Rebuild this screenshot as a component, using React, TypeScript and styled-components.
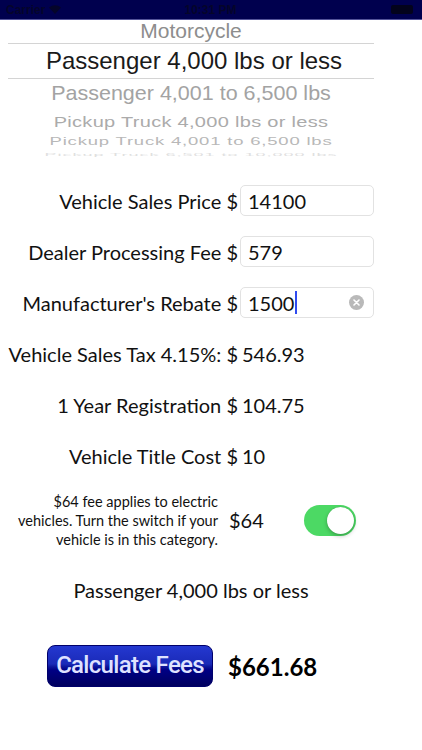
import React from "react";
import styled, { createGlobalStyle } from "styled-components";

const Global = createGlobalStyle`
  html, body { margin: 0; padding: 0; background: #fff; }
  body { font-family: "Lato", "Open Sans", sans-serif; color: #111; }
`;

const Page = styled.div`
  width: 422px;
  height: 750px;
  overflow: hidden;
  background: #fff;
`;

const StatusBar = styled.div`
  height: 20px;
  background: #00004e;
  border-bottom: 1px solid #54549a;
  box-sizing: border-box;
  display: grid;
  grid-template-columns: 1fr auto 1fr;
  align-items: center;
  padding: 0 7px 0 6px;
  font-family: "Liberation Sans", Arial, sans-serif;
  font-size: 12px;
  font-weight: 700;
  color: #05052a;
`;

const Carrier = styled.div`
  display: flex;
  align-items: center;
  gap: 4px;
`;

const Battery = styled.div`
  justify-self: end;
  width: 22px;
  height: 9px;
  background: #03031c;
  border-radius: 2px;
  margin-right: 2px;
`;

const Picker = styled.div`
  width: 366px;
  margin-left: 8px;
  height: 133px;
  display: flex;
  flex-direction: column;
  font-family: "Liberation Sans", Arial, sans-serif;
`;

const PickerItem = styled.div<{ $h: number; $size: number; $color: string; $sy: number; $ls?: number }>`
  height: ${(p) => p.$h}px;
  flex: none;
  display: flex;
  align-items: center;
  justify-content: center;
  font-size: ${(p) => p.$size}px;
  line-height: 1;
  color: ${(p) => p.$color};
  letter-spacing: ${(p) => p.$ls ?? 0}px;
  white-space: nowrap;
  transform: scaleY(${(p) => p.$sy});
`;

const SelectedItem = styled.div`
  height: 34px;
  flex: none;
  border-top: 1px solid #d4d4d4;
  border-bottom: 1px solid #d4d4d4;
  display: flex;
  align-items: center;
  justify-content: center;
  font-size: 24px;
  color: #1a1a1a;
  padding-left: 6px;
  white-space: nowrap;
`;

const Form = styled.div`
  margin-top: 22px;
  display: flex;
  flex-direction: column;
`;

const Row = styled.div`
  height: 51px;
  display: grid;
  grid-template-columns: 238px auto;
  align-items: center;
  font-size: 20px;
`;

const Label = styled.div`
  text-align: right;
  white-space: nowrap;
`;

const Value = styled.div`
  padding-left: 4px;
  white-space: nowrap;
`;

const Input = styled.div`
  margin-left: 2px;
  width: 134px;
  height: 31px;
  box-sizing: border-box;
  border: 1px solid #e2e2e2;
  border-radius: 5px;
  display: flex;
  align-items: center;
  padding-left: 7px;
  padding-right: 9px;
  font-size: 20px;
`;

const Caret = styled.span`
  display: inline-block;
  width: 2px;
  height: 23px;
  background: #2f4bf0;
  margin-left: 1px;
`;

const Clear = styled.span`
  margin-left: auto;
  width: 15px;
  height: 15px;
  border-radius: 50%;
  background: #b9b9b9;
  display: flex;
  align-items: center;
  justify-content: center;
`;

const ElectricRow = styled.div`
  margin-top: 10px;
  height: 58px;
  display: grid;
  grid-template-columns: 218px 86px 52px;
  align-items: center;
`;

const Note = styled.div`
  text-align: right;
  font-size: 14.5px;
  line-height: 19px;
  white-space: nowrap;
`;

const NotePrice = styled.div`
  padding-left: 11px;
  font-size: 20px;
`;

const Toggle = styled.div<{ $on: boolean }>`
  width: 52px;
  height: 31px;
  border-radius: 16px;
  background: ${(p) => (p.$on ? "#4cd964" : "#e5e5e5")};
  display: flex;
  align-items: center;
  justify-content: ${(p) => (p.$on ? "flex-end" : "flex-start")};
  padding: 0 2px;
  box-sizing: border-box;
`;

const Knob = styled.div`
  width: 27px;
  height: 27px;
  border-radius: 50%;
  background: #fff;
  box-shadow: 0 2px 4px rgba(0, 0, 0, 0.25), 0 0 1px rgba(0, 0, 0, 0.2);
`;

const Category = styled.div`
  margin-top: 29px;
  width: 382px;
  text-align: center;
  font-size: 20px;
`;

const TotalRow = styled.div`
  margin-top: 43px;
  display: flex;
  align-items: center;
  padding-left: 47px;
  gap: 15px;
`;

const CalcButton = styled.button`
  width: 166px;
  height: 42px;
  border-radius: 8px;
  border: 1px solid #00006a;
  background: linear-gradient(
    to bottom,
    #2438d0 0%,
    #1a2ab8 45%,
    #0c159a 52%,
    #000084 60%,
    #00005e 100%
  );
  color: #dfe2ff;
  font-family: "Roboto", "Liberation Sans", sans-serif;
  font-weight: 500;
  font-size: 24px;
  letter-spacing: -0.7px;
  padding: 0 0 2px 0;
  cursor: pointer;
`;

const Total = styled.div`
  font-size: 24px;
  font-weight: 700;
  color: #000;
`;

export default function App() {
  return (
    <Page>
      <Global />
      <StatusBar>
        <Carrier>
          Carrier
          <svg width="12" height="9" viewBox="0 0 12 9">
            <path d="M6 9 L0 2.5 Q6 -2 12 2.5 Z" fill="#05052a" />
          </svg>
        </Carrier>
        <div>10:31 PM</div>
        <Battery />
      </StatusBar>

      <Picker>
        <PickerItem $h={23} $size={21} $color="#8d8d8d" $sy={0.92}>Motorcycle</PickerItem>
        <SelectedItem>Passenger 4,000 lbs or less</SelectedItem>
        <PickerItem $h={32} $size={21.5} $color="#a3a3a3" $sy={0.9}>Passenger 4,001 to 6,500 lbs</PickerItem>
        <PickerItem $h={21} $size={20} $color="#ababab" $sy={0.72} $ls={0.3}>Pickup Truck 4,000 lbs or less</PickerItem>
        <PickerItem $h={20} $size={18.5} $color="#b8b8b8" $sy={0.55} $ls={0.8}>Pickup Truck 4,001 to 6,500 lbs</PickerItem>
        <PickerItem $h={6} $size={18} $color="#e0e0e0" $sy={0.22} $ls={1}>Pickup Truck 6,501 to 10,000 lbs</PickerItem>
      </Picker>

      <Form>
        <Row>
          <Label>Vehicle Sales Price $</Label>
          <Input>14100</Input>
        </Row>
        <Row>
          <Label>Dealer Processing Fee $</Label>
          <Input>579</Input>
        </Row>
        <Row>
          <Label>Manufacturer's Rebate $</Label>
          <Input>
            1500
            <Caret />
            <Clear>
              <svg width="7" height="7" viewBox="0 0 7 7">
                <path d="M1 1 L6 6 M6 1 L1 6" stroke="#fff" strokeWidth="1.6" strokeLinecap="round" />
              </svg>
            </Clear>
          </Input>
        </Row>
        <Row>
          <Label>Vehicle Sales Tax 4.15%: $</Label>
          <Value>546.93</Value>
        </Row>
        <Row>
          <Label>1 Year Registration $</Label>
          <Value>104.75</Value>
        </Row>
        <Row>
          <Label>Vehicle Title Cost $</Label>
          <Value>10</Value>
        </Row>

        <ElectricRow>
          <Note>
            $64 fee applies to electric
            <br />
            vehicles. Turn the switch if your
            <br />
            vehicle is in this category.
          </Note>
          <NotePrice>$64</NotePrice>
          <Toggle $on={true}>
            <Knob />
          </Toggle>
        </ElectricRow>

        <Category>Passenger 4,000 lbs or less</Category>

        <TotalRow>
          <CalcButton>Calculate Fees</CalcButton>
          <Total>$661.68</Total>
        </TotalRow>
      </Form>
    </Page>
  );
}
